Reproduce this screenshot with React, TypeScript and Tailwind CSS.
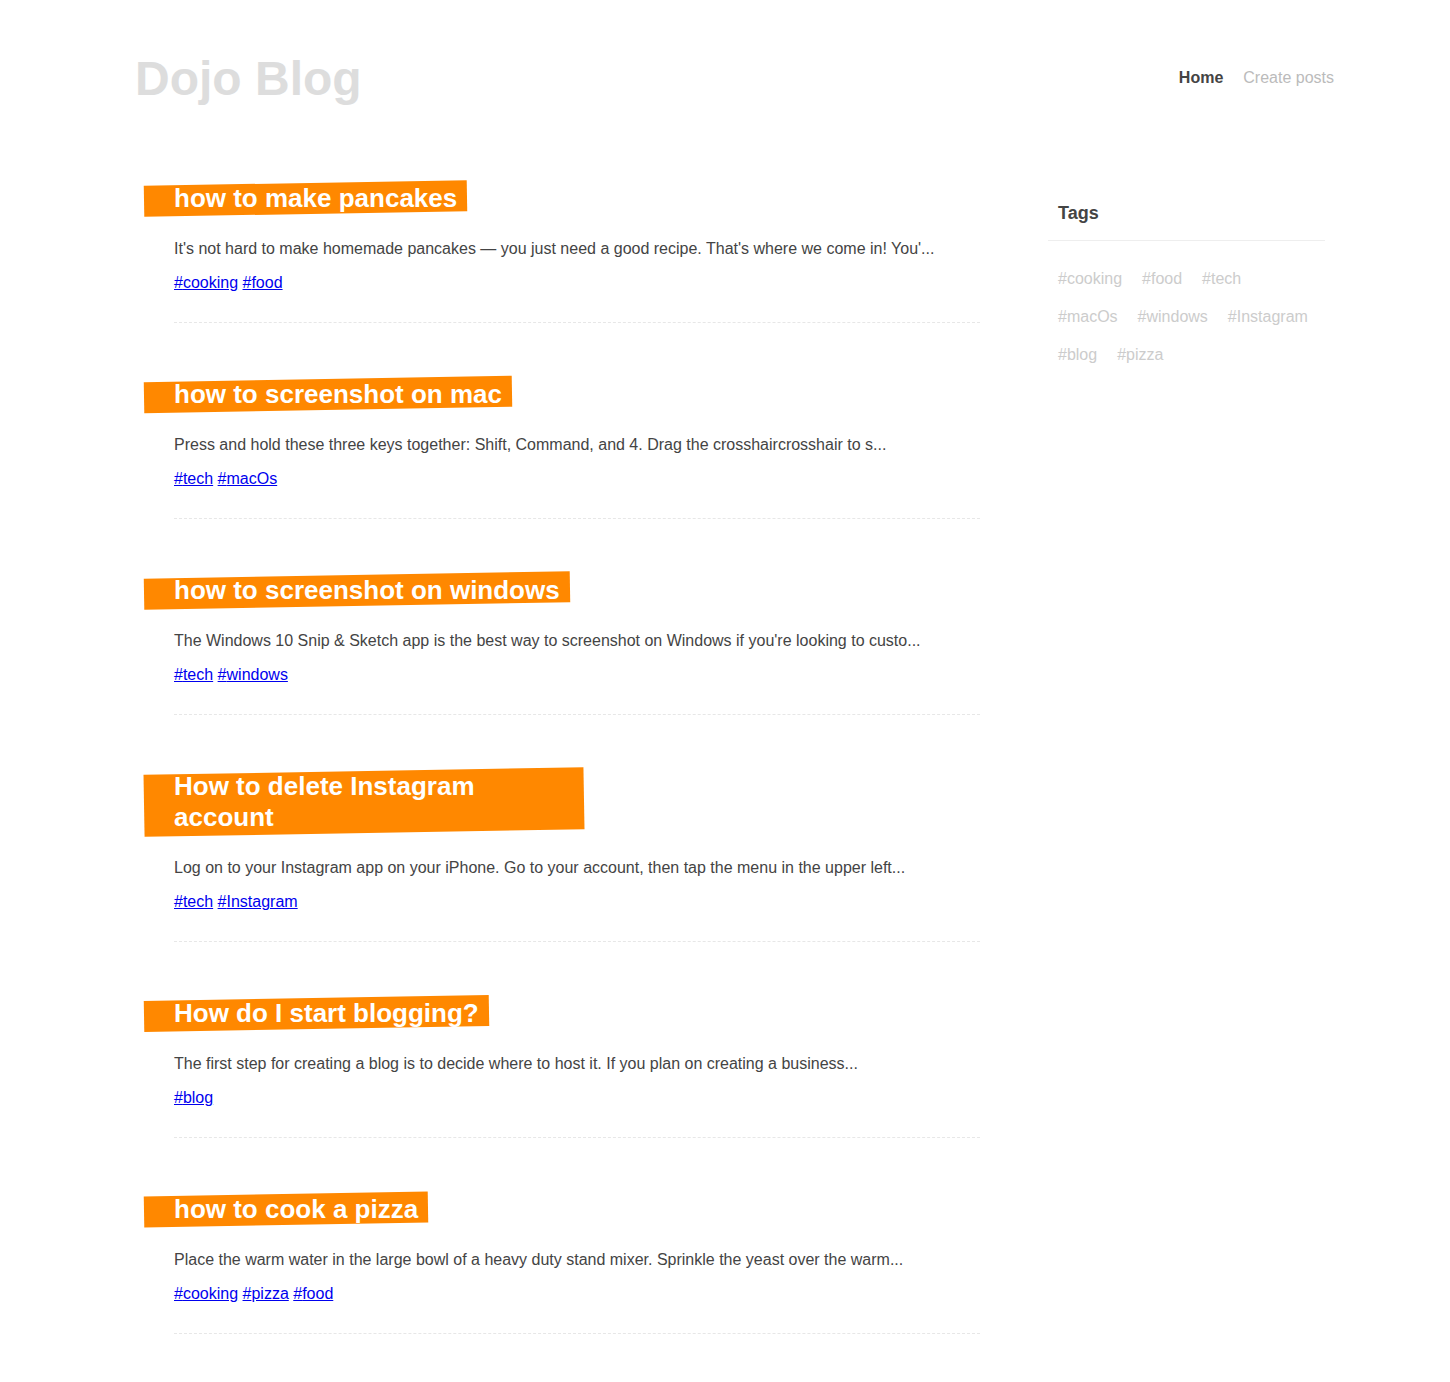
const posts = [
  {
    title: "how to make pancakes",
    body: "It's not hard to make homemade pancakes — you just need a good recipe. That's where we come in! You'...",
    tags: ["cooking", "food"],
  },
  {
    title: "how to screenshot on mac",
    body: "Press and hold these three keys together: Shift, Command, and 4. Drag the crosshaircrosshair to s...",
    tags: ["tech", "macOs"],
  },
  {
    title: "how to screenshot on windows",
    body: "The Windows 10 Snip & Sketch app is the best way to screenshot on Windows if you're looking to custo...",
    tags: ["tech", "windows"],
  },
  {
    title: "How to delete Instagram account",
    body: "Log on to your Instagram app on your iPhone. Go to your account, then tap the menu in the upper left...",
    tags: ["tech", "Instagram"],
  },
  {
    title: "How do I start blogging?",
    body: "The first step for creating a blog is to decide where to host it. If you plan on creating a business...",
    tags: ["blog"],
  },
  {
    title: "how to cook a pizza",
    body: "Place the warm water in the large bowl of a heavy duty stand mixer. Sprinkle the yeast over the warm...",
    tags: ["cooking", "pizza", "food"],
  },
]

const allTags = ["cooking", "food", "tech", "macOs", "windows", "Instagram", "blog", "pizza"]

function Post({ title, body, tags }: { title: string; body: string; tags: string[] }) {
  return (
    <div className="mb-[56px] border-b border-dashed border-[#e7e7e7] pb-[30px]">
      {/* orange band sits behind the title, tilted a degree */}
      <h3 className="relative isolate block w-fit max-w-[400px] text-[26px] font-bold leading-[31px] text-white before:absolute before:top-0 before:-left-[30px] before:-z-10 before:h-full before:w-[calc(100%+40px)] before:-rotate-1 before:bg-[#ff8800] before:content-['']">
        {title}
      </h3>
      <p className="mt-[26px] text-base leading-[18px] text-[#444]">{body}</p>
      <div className="mt-[16px] text-base leading-[18px]">
        {tags.map((tag, i) => (
          <span key={tag}>
            {i > 0 && " "}
            <a href="#" className="text-[#0000ee] underline">
              #{tag}
            </a>
          </span>
        ))}
      </div>
    </div>
  )
}

export default function App() {
  return (
    <div className="min-h-screen bg-white font-['Liberation_Sans',Arial,sans-serif]">
      <div className="mx-auto w-[1200px]">
        {/* Header */}
        <header className="flex items-center justify-between pt-[51px] pl-[10px] -mr-[9px]">
          <h1 className="text-[48px] font-bold leading-[55px] text-[#dddddd]">Dojo Blog</h1>
          <nav className="-mt-[2px] flex gap-[20px] text-base leading-[18px]">
            <a href="#" className="font-bold text-[#444]">
              Home
            </a>
            <a href="#" className="text-[#bbbbbb]">
              Create posts
            </a>
          </nav>
        </header>

        <div className="grid grid-cols-[923px_277px]">
          {/* Posts */}
          <div className="pt-[77px] pl-[49px] pr-[68px]">
            {posts.map((p) => (
              <Post key={p.title} {...p} />
            ))}
          </div>

          {/* Tag cloud */}
          <div className="pt-[97px]">
            <h3 className="border-b border-[#eeeeee] px-[10px] pb-[16px] text-[18px] font-bold leading-[21px] text-[#444]">
              Tags
            </h3>
            <div className="mt-[19px] flex flex-wrap">
              {allTags.map((t) => (
                <div key={t} className="p-[10px] text-base leading-[18px]">
                  <a href="#" className="text-[#cccccc]">
                    #{t}
                  </a>
                </div>
              ))}
            </div>
          </div>
        </div>
      </div>
    </div>
  )
}
